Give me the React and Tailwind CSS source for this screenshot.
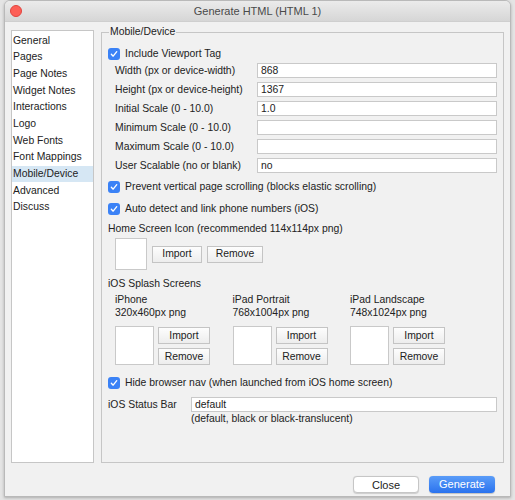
import React from 'react';

const sections = [
  'General',
  'Pages',
  'Page Notes',
  'Widget Notes',
  'Interactions',
  'Logo',
  'Web Fonts',
  'Font Mappings',
  'Mobile/Device',
  'Advanced',
  'Discuss',
];

const viewportFields = [
  { label: 'Width (px or device-width)', value: '868' },
  { label: 'Height (px or device-height)', value: '1367' },
  { label: 'Initial Scale (0 - 10.0)', value: '1.0' },
  { label: 'Minimum Scale (0 - 10.0)', value: '' },
  { label: 'Maximum Scale (0 - 10.0)', value: '' },
  { label: 'User Scalable (no or blank)', value: 'no' },
];

const splashScreens = [
  { name: 'iPhone', size: '320x460px png' },
  { name: 'iPad Portrait', size: '768x1004px png' },
  { name: 'iPad Landscape', size: '748x1024px png' },
];

const Check = ({ label }) => (
  <div className="flex h-[18px] items-center">
    <span className="flex h-[12px] w-[12px] items-center justify-center rounded-[3px] bg-[#3b82f6]">
      <svg viewBox="0 0 12 12" className="h-[10px] w-[10px]" fill="none" stroke="white" strokeWidth="1.6" strokeLinecap="round" strokeLinejoin="round">
        <path d="M2.8 6.3 L5 8.6 L9.3 3.2" />
      </svg>
    </span>
    <span className="ml-[5px]">{label}</span>
  </div>
);

const SmallButton = ({ children, className = '' }) => (
  <button className={`flex h-[17px] items-center justify-center border border-[#c4c4c4] bg-gradient-to-b from-[#fdfdfd] to-[#ededed] text-[10.4px] text-[#222] ${className}`}>
    {children}
  </button>
);

const TextInput = ({ value, className = '' }) => (
  <div className={`flex h-[15px] items-center border border-[#c9c9c9] bg-white pl-[3px] text-[10.4px] ${className}`}>
    {value}
  </div>
);

export default function App() {
  return (
    <div className="h-[500px] w-[515px] bg-[#e4e4e4] pl-[4px] text-[10.4px] text-[#222]" style={{ fontFamily: '"Liberation Sans", Arial, sans-serif' }}>
      <div className="flex h-[497px] w-[507px] flex-col overflow-hidden rounded-t-[6px] border border-[#b9b9b9] bg-[#f1f1f1] shadow-[0_1px_3px_rgba(0,0,0,0.25)]">
        {/* title bar */}
        <div className="relative flex h-[21px] shrink-0 items-center justify-center border-b border-[#cfcfcf] bg-gradient-to-b from-[#ebebeb] to-[#d6d6d6]">
          <span className="absolute left-[5px] top-[4px] h-[12px] w-[12px] rounded-full border border-[#e0443e] bg-[#fd5f57]" />
          <span className="text-[11px] text-[#4a4a4a]">Generate HTML (HTML 1)</span>
        </div>

        <div className="flex flex-1 flex-col px-[6px] pt-[8px]">
          <div className="flex h-[433px] gap-[7px]">
            {/* section list */}
            <div className="w-[85px] border border-[#c6c6c6] bg-white pt-[1px]">
              {sections.map((s) => (
                <div
                  key={s}
                  className={`flex h-[16.7px] items-center pl-[1px] ${s === 'Mobile/Device' ? 'bg-[#d6e7f4]' : ''}`}
                >
                  {s}
                </div>
              ))}
            </div>

            {/* settings group */}
            <fieldset className="-mt-[5px] w-[403px] border border-[#c6c6c6] pl-[6px] pr-[6px]">
              <legend className="ml-[1px] px-[1px] leading-[14px] text-[#222]">Mobile/Device</legend>

              <div className="mt-[6px]">
                <Check label="Include Viewport Tag" />
              </div>

              <div className="flex flex-col gap-[4px] pl-[7px]">
                {viewportFields.map((f) => (
                  <div key={f.label} className="flex h-[15px] items-center">
                    <span className="w-[142px]">{f.label}</span>
                    <TextInput value={f.value} className="w-[240px]" />
                  </div>
                ))}
              </div>

              <div className="mt-[5px]">
                <Check label="Prevent vertical page scrolling (blocks elastic scrolling)" />
              </div>
              <div className="mt-[4px]">
                <Check label="Auto detect and link phone numbers (iOS)" />
              </div>

              <div className="mt-[3px] flex h-[16px] items-center">
                Home Screen Icon (recommended 114x114px png)
              </div>
              <div className="mt-[1px] flex items-center gap-[5px] pl-[7px]">
                <div className="h-[32px] w-[32px] border border-[#c9c9c9] bg-white" />
                <SmallButton className="w-[50px]">Import</SmallButton>
                <SmallButton className="w-[56px]">Remove</SmallButton>
              </div>

              <div className="mt-[6px] flex h-[16px] items-center">iOS Splash Screens</div>
              <div className="mt-[1px] flex pl-[7px]">
                {splashScreens.map((sp) => (
                  <div key={sp.name} className="w-[117.5px]">
                    <div className="leading-[13px]">{sp.name}</div>
                    <div className="leading-[13px]">{sp.size}</div>
                    <div className="mt-[7px] flex gap-[4px]">
                      <div className="h-[39px] w-[39px] border border-[#c9c9c9] bg-white" />
                      <div className="flex flex-col justify-between pt-[1px]">
                        <SmallButton className="w-[52px]">Import</SmallButton>
                        <SmallButton className="w-[52px]">Remove</SmallButton>
                      </div>
                    </div>
                  </div>
                ))}
              </div>

              <div className="mt-[9px]">
                <Check label="Hide browser nav (when launched from iOS home screen)" />
              </div>

              <div className="mt-[5px] flex">
                <span className="w-[83px] leading-[15px]">iOS Status Bar</span>
                <div className="flex flex-col">
                  <TextInput value="default" className="w-[306px]" />
                  <span className="leading-[13px]">(default, black or black-translucent)</span>
                </div>
              </div>
            </fieldset>
          </div>

          {/* dialog buttons */}
          <div className="mt-[13px] flex justify-end gap-[10px] pr-[9px]">
            <button className="h-[17px] w-[66px] rounded-[4px] border border-[#c6c6c6] bg-white text-[11px] text-[#222] shadow-[0_0.5px_1px_rgba(0,0,0,0.15)]">
              Close
            </button>
            <button className="h-[17px] w-[66px] rounded-[4px] bg-gradient-to-b from-[#5a9cf8] to-[#2a72ee] text-[11px] text-white shadow-[0_0.5px_1px_rgba(0,0,0,0.2)]">
              Generate
            </button>
          </div>
        </div>
      </div>
    </div>
  );
}
